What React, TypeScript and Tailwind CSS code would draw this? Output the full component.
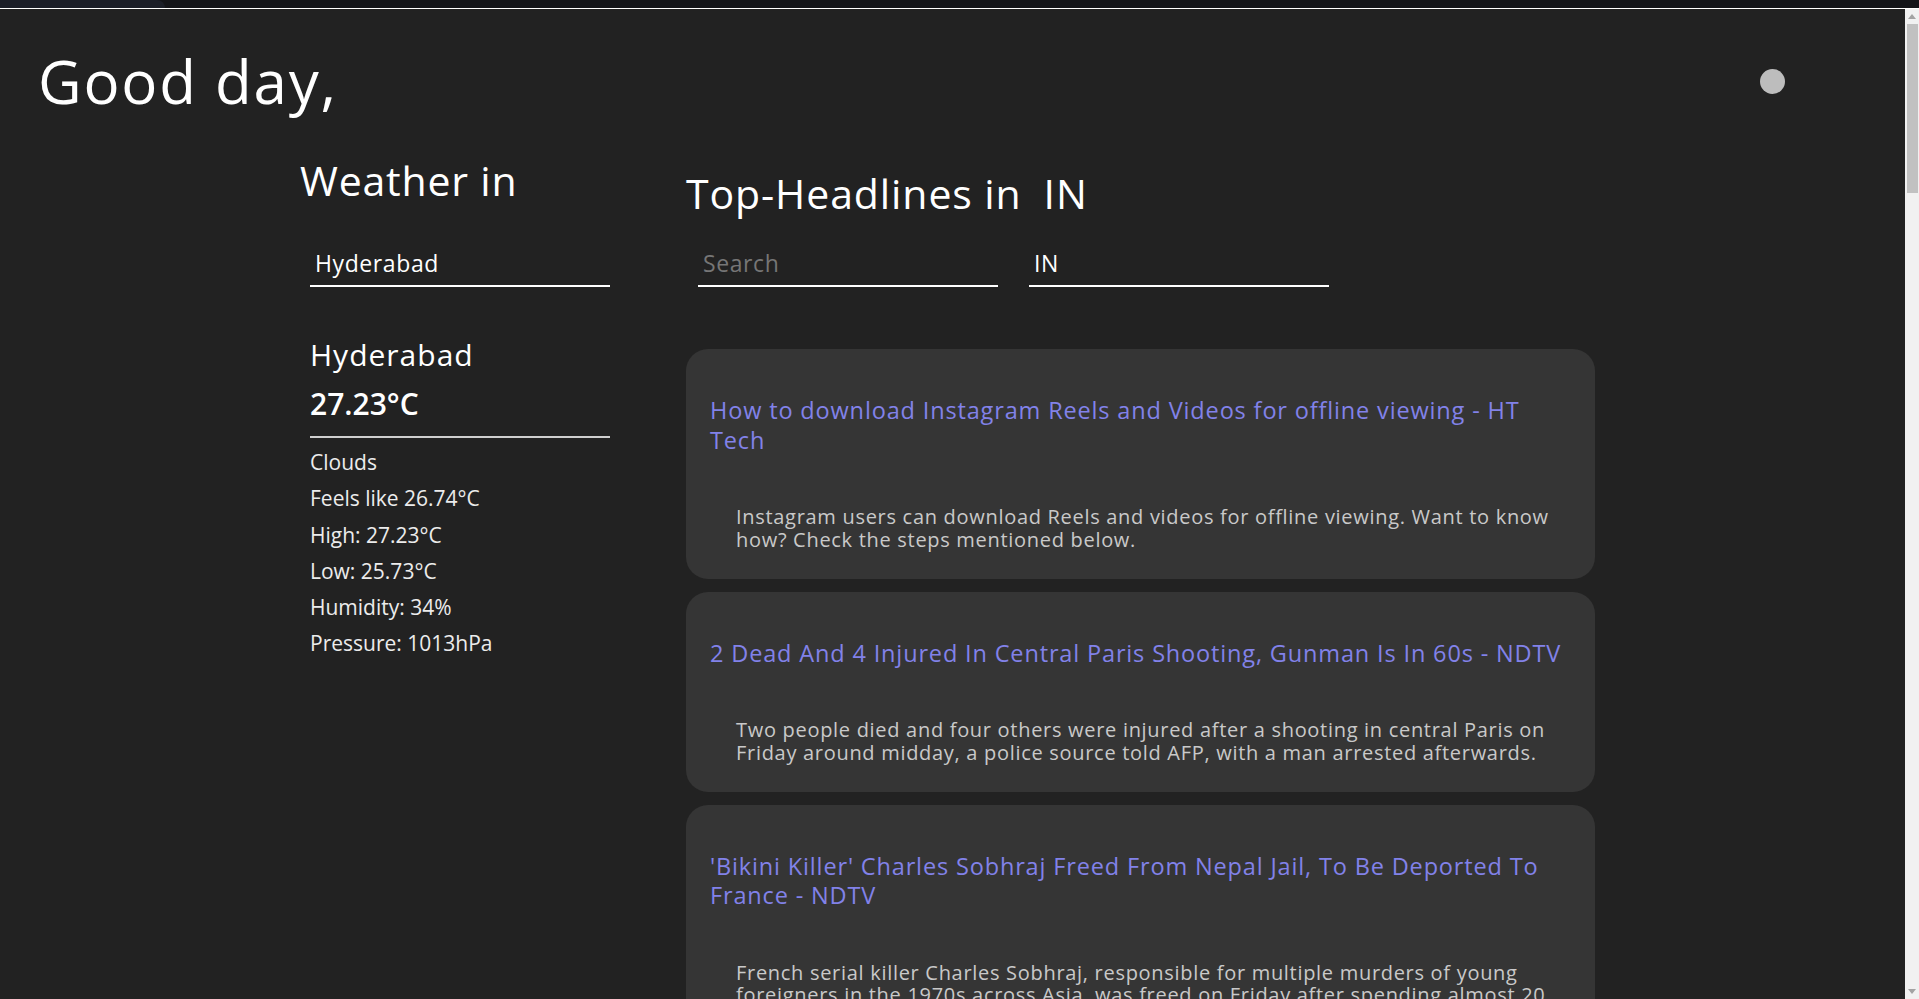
import React from "react";

type Article = { title: string; description: string };

const articles: Article[] = [
  {
    title: "How to download Instagram Reels and Videos for offline viewing - HT Tech",
    description:
      "Instagram users can download Reels and videos for offline viewing. Want to know how? Check the steps mentioned below.",
  },
  {
    title: "2 Dead And 4 Injured In Central Paris Shooting, Gunman Is In 60s - NDTV",
    description:
      "Two people died and four others were injured after a shooting in central Paris on Friday around midday, a police source told AFP, with a man arrested afterwards.",
  },
  {
    title: "'Bikini Killer' Charles Sobhraj Freed From Nepal Jail, To Be Deported To France - NDTV",
    description:
      "French serial killer Charles Sobhraj, responsible for multiple murders of young foreigners in the 1970s across Asia, was freed on Friday after spending almost 20 years in a Nepali prison.",
  },
];

const details = [
  "Clouds",
  "Feels like 26.74°C",
  "High: 27.23°C",
  "Low: 25.73°C",
  "Humidity: 34%",
  "Pressure: 1013hPa",
];

function NewsCard({ article }: { article: Article }) {
  return (
    <div className="rounded-[22px] bg-[#353535] pt-[47px] pb-[27px] px-[24px]">
      <a className="block text-[23.5px] leading-[29.5px] tracking-[0.85px] text-[#8282e9]">
        {article.title}
      </a>
      <p className="mt-[51px] ml-[26px] text-[20px] leading-[22.8px] tracking-[0.7px] text-[#c9c9c9]">
        {article.description}
      </p>
    </div>
  );
}

function Scrollbar() {
  return (
    <div className="w-[14px] shrink-0 flex flex-col bg-[#f1f1f1]">
      <div className="h-[15px] flex items-center justify-center">
        <svg width="8" height="5" viewBox="0 0 8 5">
          <path d="M4 0 L8 5 L0 5 Z" fill="#a3a3a3" />
        </svg>
      </div>
      <div className="ml-[2px] mr-[1px] h-[169px] bg-[#c1c1c1]" />
      <div className="flex-1" />
      <div className="h-[15px] flex items-center justify-center">
        <svg width="8" height="5" viewBox="0 0 8 5">
          <path d="M0 0 L8 0 L4 5 Z" fill="#a3a3a3" />
        </svg>
      </div>
    </div>
  );
}

export default function App() {
  return (
    <div className="h-screen flex flex-col overflow-hidden font-['Open_Sans',sans-serif]">
      {/* browser strip */}
      <div className="flex h-[8px] bg-[#131418]">
        <div className="w-[165px] bg-[#1b1e27] rounded-tr-[8px]" />
      </div>
      <div className="h-[1px] bg-white" />

      <div className="flex-1 flex min-h-0">
        <div className="flex-1 overflow-hidden bg-[#222222] text-white">
          <header className="flex items-center justify-between pt-[36px] pl-[38px] pr-[120px]">
            <h1 className="text-[60px] leading-[72px] tracking-[1.8px]">Good day,</h1>
            <div className="w-[25px] h-[25px] rounded-full bg-[#bdbdbd]" />
          </header>

          <main className="flex pl-[300px] pb-[24px]">
            <section className="w-[386px] shrink-0">
              <h2 className="mt-[38px] text-[41px] leading-[50px] tracking-[0.8px]">Weather in</h2>
              <div className="ml-[10px] w-[300px]">
                <input
                  className="mt-[36px] block w-[300px] h-[46px] border-b-2 border-white bg-transparent px-[5px] text-[23px] font-medium tracking-[0.6px] text-white outline-none"
                  defaultValue="Hyderabad"
                />
                <div className="mt-[43px] text-[30px] leading-[49px] font-medium tracking-[1px]">Hyderabad</div>
                <div className="text-[30px] leading-[49px] font-semibold">27.23°C</div>
                <div className="mt-[8px] h-[2px] bg-[#cfcfcf]" />
                <ul className="mt-[6px] text-[21px] leading-[36.3px] text-[#ececec]">
                  {details.map((d) => (
                    <li key={d}>{d}</li>
                  ))}
                </ul>
              </div>
            </section>

            <section className="w-[909px] shrink-0">
              <h2 className="mt-[51px] text-[41px] leading-[50px] tracking-[0.9px]">
                Top-Headlines in<span className="ml-[22px]">IN</span>
              </h2>
              <div className="mt-[23px] flex">
                <input
                  className="ml-[12px] block w-[300px] h-[46px] border-b-2 border-white bg-transparent px-[5px] text-[23px] font-medium tracking-[0.6px] text-white outline-none placeholder:text-[#767676]"
                  placeholder="Search"
                />
                <input
                  className="ml-[31px] block w-[300px] h-[46px] border-b-2 border-white bg-transparent px-[5px] text-[23px] font-medium tracking-[0.6px] text-white outline-none"
                  defaultValue="IN"
                />
              </div>
              <div className="mt-[62px] flex flex-col gap-[13px]">
                {articles.map((a) => (
                  <NewsCard key={a.title} article={a} />
                ))}
              </div>
            </section>
          </main>
        </div>
        <Scrollbar />
      </div>
    </div>
  );
}
